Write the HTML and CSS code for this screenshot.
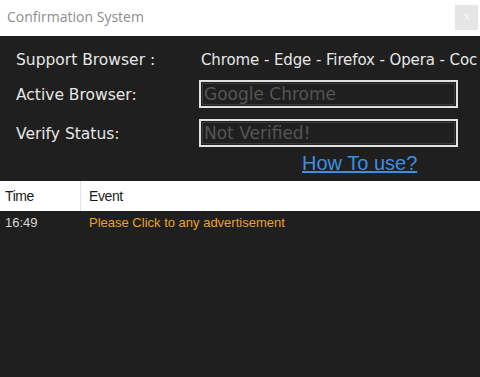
FILE: index.html
```html
<!DOCTYPE html>
<html>
<head>
<meta charset="utf-8">
<link rel="stylesheet" href="styles.css">
</head>
<body>
<div class="window">
  <div class="titlebar">
    <span class="title">Confirmation System</span>
    <span class="close">×</span>
  </div>
  <div class="form">
    <div class="row row-support">
      <span class="label">Support Browser :</span>
      <span class="value">Chrome - Edge - Firefox - Opera - Coc</span>
    </div>
    <div class="row row-field">
      <span class="label">Active Browser:</span>
      <div class="field">Google Chrome</div>
    </div>
    <div class="row row-field">
      <span class="label">Verify Status:</span>
      <div class="field">Not Verified!</div>
    </div>
    <div class="row row-link">
      <a class="link" href="#">How To use?</a>
    </div>
  </div>
  <div class="log">
    <div class="log-head">
      <div class="col-time">Time</div>
      <div class="col-event">Event</div>
    </div>
    <div class="log-row">
      <div class="col-time">16:49</div>
      <div class="col-event msg">Please Click to any advertisement</div>
    </div>
  </div>
</div>
</body>
</html>
```

FILE: styles.css
```css
html, body {
  margin: 0;
  padding: 0;
}
body {
  width: 480px;
  height: 377px;
  background: #1f1f1f;
  overflow: hidden;
}
.window {
  display: flex;
  flex-direction: column;
  height: 377px;
}
.titlebar {
  height: 36px;
  background: #ffffff;
  display: flex;
  align-items: center;
  justify-content: space-between;
  padding: 0 2px 0 7px;
  box-sizing: border-box;
}
.title {
  font-family: "Open Sans", "Noto Sans", sans-serif;
  font-size: 14px;
  color: #8c8c8c;
  margin-top: -3px;
}
.close {
  width: 23px;
  height: 25px;
  background: #e5e5e5;
  color: #f4f4f4;
  font-family: "DejaVu Sans", sans-serif;
  font-size: 12px;
  display: flex;
  align-items: center;
  justify-content: center;
  margin-top: -2px;
}
.form {
  display: flex;
  flex-direction: column;
  padding-left: 16px;
  height: 145px;
  box-sizing: border-box;
}
.row {
  display: flex;
  align-items: center;
}
.label {
  width: 183px;
  font-family: "DejaVu Sans", sans-serif;
  font-size: 15.5px;
  color: #e6e6e6;
}
.row-support {
  height: 36px;
  margin-top: 8px;
  padding-bottom: 4px;
  box-sizing: border-box;
}
.value {
  font-family: "DejaVu Sans", sans-serif;
  font-size: 15px;
  color: #e6e6e6;
  padding-left: 2px;
  letter-spacing: -0.1px;
  white-space: nowrap;
}
.row-field {
  height: 28px;
  margin-bottom: 11px;
}
.row-field .label {
  margin-top: 2px;
}
.field {
  width: 259px;
  height: 28px;
  box-sizing: border-box;
  border: 2px solid #e2e2e2;
  box-shadow: inset 0 0 0 1px #1f1f1f, inset 0 0 0 2px #3c3c3c;
  background: #1f1f1f;
  font-family: "DejaVu Sans", sans-serif;
  font-size: 17px;
  color: #555555;
  line-height: 24px;
  padding-left: 3px;
  white-space: nowrap;
  overflow: hidden;
}
.row-link {
  margin-top: -7px;
  height: 24px;
  padding-left: 286px;
}
.link {
  font-family: "Liberation Sans", Arial, sans-serif;
  font-size: 20px;
  color: #3d8fe0;
  text-decoration: underline;
}
.log {
  flex: 1;
  font-family: "Liberation Sans", Arial, sans-serif;
  font-size: 13px;
}
.log-head {
  height: 30px;
  background: #ffffff;
  display: flex;
  align-items: center;
  color: #1a1a1a;
  font-size: 14px;
  letter-spacing: -0.4px;
}
.log-head .col-time {
  border-right: 1px solid #e5e5e5;
  height: 30px;
  line-height: 30px;
}
.col-time {
  width: 75px;
  padding-left: 5px;
}
.col-event {
  padding-left: 8px;
}
.log-row {
  display: flex;
  height: 22px;
  align-items: center;
  color: #d8d8d8;
}
.msg {
  color: #e8a31f;
  padding-left: 9px;
}
```
